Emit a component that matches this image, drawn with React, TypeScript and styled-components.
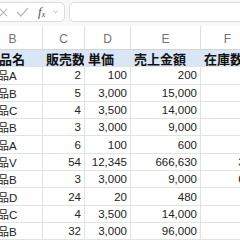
import styled, { createGlobalStyle } from 'styled-components';

const GlobalStyle = createGlobalStyle`
  html, body {
    margin: 0;
    padding: 0;
    background: #ffffff;
    overflow: hidden;
  }
  body {
    font-family: "Liberation Sans", "Noto Sans CJK JP", sans-serif;
  }
`;

const LETTERS = ['B', 'C', 'D', 'E', 'F'];
const HEADERS = ['商品名', '販売数', '単価', '売上金額', '在庫数'];

const ROWS: { name: string; qty: number; price: number; stock?: number }[] = [
  { name: '商品A', qty: 2, price: 100 },
  { name: '商品B', qty: 5, price: 3000 },
  { name: '商品C', qty: 4, price: 3500 },
  { name: '商品B', qty: 3, price: 3000 },
  { name: '商品A', qty: 6, price: 100 },
  { name: '商品V', qty: 54, price: 12345, stock: 35 },
  { name: '商品B', qty: 3, price: 3000, stock: 60 },
  { name: '商品D', qty: 24, price: 20 },
  { name: '商品C', qty: 4, price: 3500 },
  { name: '商品B', qty: 32, price: 3000 },
];

const fmt = (n: number) => n.toLocaleString('en-US');

const App = () => {
  return (
    <Page>
      <GlobalStyle />
      <Toolbar>
        <Controls>
          <svg width="9" height="9" viewBox="0 0 10 10">
            <path d="M1 1 L9 9 M9 1 L1 9" stroke="#b5b5b5" strokeWidth="1.2" fill="none" />
          </svg>
          <svg width="13" height="10" viewBox="0 0 13 10">
            <path d="M1 5 L4.8 9 L12 1" stroke="#b8b8b8" strokeWidth="1.2" fill="none" />
          </svg>
          <Fx>
            f<sub>x</sub>
          </Fx>
          <svg width="5" height="4" viewBox="0 0 6 4">
            <path d="M0.5 0.5 L3 3 L5.5 0.5" stroke="#a0a0a0" strokeWidth="1" fill="none" />
          </svg>
        </Controls>
        <FormulaInput />
      </Toolbar>
      <Sheet>
        {LETTERS.map((l) => (
          <ColHead key={l}>{l}</ColHead>
        ))}
        {HEADERS.map((h) => (
          <Cell key={h} $header>
            {h}
          </Cell>
        ))}
        {ROWS.map((r, i) => (
          <Row key={i}>
            <Cell>{r.name}</Cell>
            <Cell $num>{r.qty}</Cell>
            <Cell $num>{fmt(r.price)}</Cell>
            <Cell $num>{fmt(r.qty * r.price)}</Cell>
            <Cell $num>{r.stock ?? ''}</Cell>
          </Row>
        ))}
      </Sheet>
    </Page>
  );
};

const Page = styled.div`
  width: 240px;
  height: 240px;
  overflow: hidden;
  background: #ffffff;
`;

const Toolbar = styled.div`
  display: flex;
  align-items: center;
  gap: 4px;
  height: 26px;
  padding-bottom: 2px;
  box-sizing: border-box;
  background: #f8f8f8;
  margin-left: -10px;
`;

const Controls = styled.div`
  display: flex;
  align-items: center;
  gap: 8px;
  height: 20px;
  padding: 0 6px 0 8px;
  background: #ffffff;
  border: 1px solid #dcdcdc;
  border-radius: 5px;
  box-sizing: border-box;
`;

const Fx = styled.span`
  font-family: "Liberation Serif", serif;
  font-style: italic;
  font-size: 13px;
  color: #555555;
  line-height: 1;
  margin-left: 1px;

  sub {
    font-size: 8px;
    vertical-align: -1px;
  }
`;

const FormulaInput = styled.div`
  flex: 1;
  height: 20px;
  min-width: 200px;
  background: #ffffff;
  border: 1px solid #dcdcdc;
  border-radius: 5px;
  box-sizing: border-box;
`;

const Sheet = styled.div`
  display: grid;
  grid-template-columns: 60px 42px 46px 70px 54px;
  grid-template-rows: 24px;
  grid-auto-rows: 17.3px;
  margin-left: -17px;
  width: 272px;
`;

const Row = styled.div`
  display: contents;
`;

const ColHead = styled.div`
  display: flex;
  align-items: flex-end;
  justify-content: center;
  padding-bottom: 3px;
  box-sizing: border-box;
  font-size: 12px;
  color: #747474;
  background: #ffffff;
  border-right: 1px solid #dedede;
  border-bottom: 1px solid #d4d4d4;
`;

const Cell = styled.div<{ $header?: boolean; $num?: boolean }>`
  display: flex;
  align-items: center;
  justify-content: ${(p) => (p.$num ? 'flex-end' : 'flex-start')};
  padding: 0 3px;
  box-sizing: border-box;
  overflow: hidden;
  white-space: nowrap;
  font-size: ${(p) => (p.$header ? '13px' : '11.5px')};
  font-weight: ${(p) => (p.$header ? 700 : 400)};
  color: ${(p) => (p.$header ? '#111111' : '#222222')};
  background: ${(p) => (p.$header ? '#d9e6f6' : '#ffffff')};
  border-right: 1px solid #e2e2e2;
  border-bottom: 1px solid #e2e2e2;
`;

export default App;
